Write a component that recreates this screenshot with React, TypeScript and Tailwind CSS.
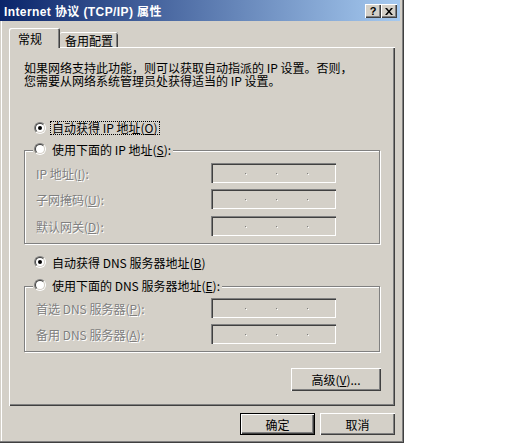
import React from "react";

const RAISED = "shadow-[inset_1px_1px_0_#fff,inset_-1px_-1px_0_#404040,inset_-2px_-2px_0_#808080]";
const SUNKEN = "shadow-[inset_1px_1px_0_#808080,inset_2px_2px_0_#404040,inset_-1px_-1px_0_#fff,inset_-2px_-2px_0_#d4d0c8]";
const DISABLED = "text-[#808080] [text-shadow:1px_1px_0_#fff]";

function Radio({ checked = false }: { checked?: boolean }) {
  return (
    <span className="flex h-[12px] w-[12px] shrink-0 rounded-full border border-t-[#808080] border-l-[#808080] border-r-white border-b-white">
      <span className="flex flex-1 items-center justify-center rounded-full border border-t-[#404040] border-l-[#404040] border-r-[#d4d0c8] border-b-[#d4d0c8] bg-white">
        {checked && <span className="h-[4px] w-[4px] rounded-full bg-black" />}
      </span>
    </span>
  );
}

function Option({ checked, focus, children }: { checked?: boolean; focus?: boolean; children: React.ReactNode }) {
  return (
    <div className="flex h-[14px] items-center">
      <Radio checked={checked} />
      {focus ? (
        <span className="ml-[5px] inline-block px-[1px] leading-[12px] outline-1 outline-dotted outline-black">{children}</span>
      ) : (
        <span className="ml-[6px] whitespace-nowrap">{children}</span>
      )}
    </div>
  );
}

function Dot() {
  return <span className="h-[1px] w-[1px] bg-[#808080] shadow-[1px_1px_0_#fff]" />;
}

function Field({ label, className = "" }: { label: React.ReactNode; className?: string }) {
  return (
    <div className={"flex h-[20px] items-center " + className}>
      <span className={"w-[186px] pl-[11px] " + DISABLED}>{label}</span>
      <div className={"flex h-[20px] w-[125px] items-start gap-[30px] bg-[#d4d0c8] pl-[34px] pt-[10px] " + SUNKEN}>
        <Dot />
        <Dot />
        <Dot />
      </div>
    </div>
  );
}

function Group({ legend, className = "", children }: { legend: React.ReactNode; className?: string; children: React.ReactNode }) {
  return (
    <div className={"relative w-[356px] border border-[#808080] shadow-[1px_1px_0_#fff,inset_1px_1px_0_#fff] " + className}>
      <div className="absolute -top-[9px] left-[8px] bg-[#d4d0c8] pl-[1px] pr-[2px]">
        <Option>{legend}</Option>
      </div>
      {children}
    </div>
  );
}

export default function App() {
  return (
    <div className="h-[443px] w-full bg-white font-['Noto_Sans_CJK_SC',sans-serif] text-[12px] leading-[13px] text-black">
      <div className="flex h-[443px] w-[404px] flex-col bg-[#d4d0c8] shadow-[inset_-1px_-1px_0_#404040,inset_-2px_-2px_0_#808080,inset_1px_0_0_#d4d0c8,inset_2px_0_0_#fff]">
        {/* title bar */}
        <div className="flex h-[21px] w-[400px] items-start justify-between bg-[linear-gradient(to_right,#0a246a,#a6caf0)] pl-[4px] pr-[3px]">
          <span className="pt-[6px] font-['Liberation_Sans','Noto_Sans_CJK_SC',sans-serif] text-[12px] font-bold leading-[13px] tracking-[0.4px] text-white">
            Internet 协议 (TCP/IP) 属性
          </span>
          <div className="mt-[4px] flex">
            <div className={"flex h-[14px] w-[16px] items-center justify-center bg-[#d4d0c8] font-['Liberation_Sans',sans-serif] text-[11px] font-bold leading-none " + RAISED}>
              ?
            </div>
            <div className={"flex h-[14px] w-[16px] items-center justify-center bg-[#d4d0c8] " + RAISED}>
              <svg width="8" height="7" viewBox="0 0 8 7">
                <path d="M0 0h2l2 2.5L6 0h2L5 3.5 8 7H6L4 4.5 2 7H0l3-3.5z" fill="#000" />
              </svg>
            </div>
          </div>
        </div>

        <div className="pl-[9px]">
          {/* tabs */}
          <div className="mt-[7px] flex h-[19px] items-end">
            <div className="relative z-10 mb-[-1px] flex h-[20px] w-[51px] items-center rounded-t-[2px] bg-[#d4d0c8] pl-[9px] shadow-[inset_1px_1px_0_#fff,inset_-1px_0_0_#404040,inset_-2px_0_0_#808080]">
              常规
            </div>
            <div className="flex h-[15px] w-[58px] items-center justify-center rounded-t-[2px] pt-[1px] shadow-[inset_0_1px_0_#fff,inset_-1px_0_0_#404040,inset_-2px_0_0_#808080]">
              备用配置
            </div>
          </div>

          {/* page */}
          <div className={"h-[359px] w-[386px] pl-[15px] pt-[14px] " + RAISED}>
            <div className="flex w-[357px] flex-col">
              <p className="whitespace-nowrap">
                如果网络支持此功能，则可以获取自动指派的 IP 设置。否则，
                <br />
                您需要从网络系统管理员处获得适当的 IP 设置。
              </p>

              <div className="mt-[34px] pl-[10px]">
                <Option checked focus>
                  自动获得 IP 地址(<u>O</u>)
                </Option>
              </div>

              <Group className="mt-[15px] pb-[7px] pt-[12px]" legend={<>使用下面的 IP 地址(<u>S</u>):</>}>
                <Field label={<>IP 地址(<u>I</u>):</>} />
                <Field className="mt-[6px]" label={<>子网掩码(<u>U</u>):</>} />
                <Field className="mt-[7px]" label={<>默认网关(<u>D</u>):</>} />
              </Group>

              <div className="mt-[11px] pl-[10px]">
                <Option checked>
                  自动获得 DNS 服务器地址(<u>B</u>)
                </Option>
              </div>

              <Group className="mt-[17px] pb-[7px] pt-[11px]" legend={<>使用下面的 DNS 服务器地址(<u>E</u>):</>}>
                <Field label={<>首选 DNS 服务器(<u>P</u>):</>} />
                <Field className="mt-[6px]" label={<>备用 DNS 服务器(<u>A</u>):</>} />
              </Group>

              <button className={"ml-auto mt-[16px] flex h-[23px] w-[90px] items-center justify-center bg-[#d4d0c8] " + RAISED}>
                高级(<u>V</u>)...
              </button>
            </div>
          </div>

          {/* dialog buttons */}
          <div className="mt-[7px] flex w-[386px] justify-end gap-[5px]">
            <button className="flex h-[22px] w-[75px] items-center justify-center border border-black bg-[#d4d0c8] shadow-[inset_1px_1px_0_#fff,inset_-1px_-1px_0_#404040,inset_-2px_-2px_0_#808080]">
              确定
            </button>
            <button className={"flex h-[22px] w-[75px] items-center justify-center bg-[#d4d0c8] " + RAISED}>
              取消
            </button>
          </div>
        </div>
      </div>
    </div>
  );
}
